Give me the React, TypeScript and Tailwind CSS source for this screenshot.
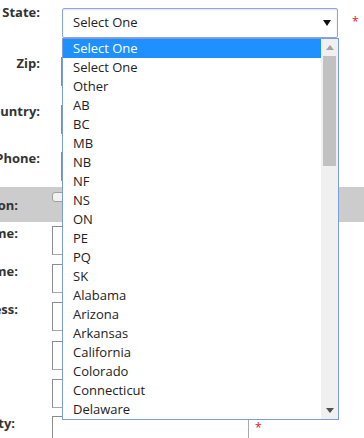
import React from 'react';

const options = [
  'Select One',
  'Select One',
  'Other',
  'AB',
  'BC',
  'MB',
  'NB',
  'NF',
  'NS',
  'ON',
  'PE',
  'PQ',
  'SK',
  'Alabama',
  'Arizona',
  'Arkansas',
  'California',
  'Colorado',
  'Connecticut',
  'Delaware',
];

const TopRow = ({ label, top }: { label: string; top: string }) => (
  <div className={`flex items-start ${top}`}>
    <div className="w-[40px] flex justify-end whitespace-nowrap font-bold text-[13px] leading-[13px] text-[#333]">
      {label}
    </div>
    <div className="ml-[21px] w-[197px] h-[29px] border border-[#a9a9a9] border-t-[#8c8c8c] border-l-[#8c8c8c] bg-white" />
  </div>
);

const BottomRow = ({ label, top, req, pr }: { label: string; top: string; req?: boolean; pr?: string }) => (
  <div className={`flex items-start ${top}`}>
    <div className={`w-[18px] flex justify-end whitespace-nowrap font-bold text-[13px] leading-[13px] pt-[1px] text-[#333] ${pr ?? ''}`}>
      {label}
    </div>
    <div className="ml-[34px] w-[197px] h-[29px] border border-[#a9a9a9] border-t-[#8c8c8c] border-l-[#8c8c8c] bg-white" />
    {req && <span className="ml-[6px] mt-[6px] text-[#e02020] text-[12px] leading-[12px]">*</span>}
  </div>
);

export default function App() {
  return (
    <div
      className="relative w-[364px] h-[438px] overflow-hidden bg-white text-[#222]"
      style={{ fontFamily: '"Open Sans", "Noto Sans", sans-serif' }}
    >
      {/* State row */}
      <div className="flex items-start pt-[8px]">
        <div className="w-[40px] flex justify-end whitespace-nowrap font-bold text-[13px] leading-[13px] -mt-[2px] text-[#333]">
          State:
        </div>
        <div className="ml-[22px] w-[276px] h-[30px] rounded-[2px] border border-[#8ba7da] bg-white shadow-[inset_0_1px_2px_rgba(0,0,0,0.12)] flex items-center justify-between pl-[10px] pr-[6px]">
          <span className="text-[13px]">Select One</span>
          <svg width="8" height="6" viewBox="0 0 8 6">
            <path d="M0 0 H8 L4 6 Z" fill="#111" />
          </svg>
        </div>
        <span className="ml-[14px] mt-[8px] text-[#e02020] text-[12px] leading-[12px]">*</span>
      </div>

      <TopRow label="Zip:" top="mt-[19px]" />
      <TopRow label="Country:" top="mt-[19px]" />
      <TopRow label="Phone:" top="mt-[18px]" />

      {/* Gray band */}
      <div className="mt-[6px] h-[35px] bg-[#cccccc] flex items-start">
        <div className="w-[18px] flex justify-end whitespace-nowrap font-bold text-[13px] leading-[13px] mt-[12px] text-[#333]">
          Location:
        </div>
        <div className="ml-[34px] mt-[5px] w-[13px] h-[10px] rounded-[3px] border border-[#a0a0a0] bg-[#f2f2f2]" />
      </div>

      <BottomRow label="First Name:" top="mt-[4px]" />
      <BottomRow label="Last Name:" top="mt-[9px]" />
      <BottomRow label="Address:" top="mt-[9px]" />
      <BottomRow label="" top="mt-[10px]" />
      <BottomRow label="" top="mt-[9px]" />
      <BottomRow label="City:" top="mt-[8px]" req pr="pr-[3px]" />

      {/* Open dropdown list */}
      <div className="absolute left-[62px] top-[38px] w-[277px] h-[382px] border border-[#7b9cd6] bg-white flex">
        <div className="flex-1">
          {options.map((o, i) => (
            <div
              key={i}
              className={`h-[19px] pl-[10px] text-[13px] leading-[19px] ${
                i === 0 ? 'bg-[#1e90ff] text-white' : 'text-[#222]'
              }`}
            >
              {o}
            </div>
          ))}
        </div>
        <div className="w-[17px] bg-[#f0f0f0] flex flex-col items-center">
          <div className="h-[17px] flex items-center justify-center">
            <svg width="8" height="5" viewBox="0 0 8 5">
              <path d="M4 0 L8 5 H0 Z" fill="#a3a3a3" />
            </svg>
          </div>
          <div className="w-[13px] h-[110px] bg-[#c1c1c1]" />
          <div className="flex-1" />
          <div className="h-[17px] flex items-center justify-center">
            <svg width="8" height="5" viewBox="0 0 8 5">
              <path d="M0 0 H8 L4 5 Z" fill="#505050" />
            </svg>
          </div>
        </div>
      </div>
    </div>
  );
}
